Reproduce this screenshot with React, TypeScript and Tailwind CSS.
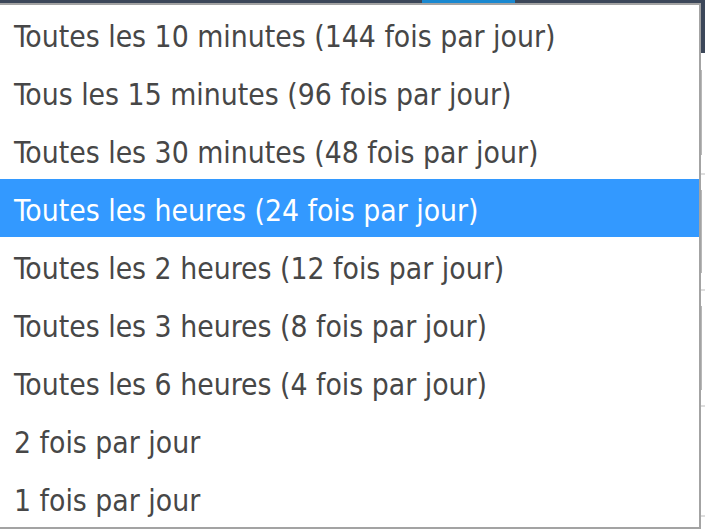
import React from 'react';

const options = [
  'Toutes les 10 minutes (144 fois par jour)',
  'Tous les 15 minutes (96 fois par jour)',
  'Toutes les 30 minutes (48 fois par jour)',
  'Toutes les heures (24 fois par jour)',
  'Toutes les 2 heures (12 fois par jour)',
  'Toutes les 3 heures (8 fois par jour)',
  'Toutes les 6 heures (4 fois par jour)',
  '2 fois par jour',
  '1 fois par jour',
];

const selected = 3;

const App: React.FC = () => {
  return (
    <div className="w-[705px] h-[531px] overflow-hidden bg-white flex flex-col">
      <div className="h-[3px] flex shrink-0">
        <div className="w-[422px] bg-[#3c4759]" />
        <div className="w-[93px] bg-[#1a88d0]" />
        <div className="flex-1 bg-[#3c4759]" />
      </div>
      <div className="flex flex-1">
        <div className="w-[701px] h-[526px] bg-white border-t-2 border-r-2 border-b-2 border-[#a3a3a3] flex flex-col">
          {options.map((o, i) => (
            <div
              key={o}
              className={
                i === selected
                  ? 'h-[58px] shrink-0 flex items-center pl-[14px] pt-[5px] bg-[#3399ff] text-white'
                  : 'h-[58px] shrink-0 flex items-center pl-[14px] pt-[5px] text-[#474747]'
              }
              style={{ fontFamily: '"DejaVu Sans Condensed", "DejaVu Sans", sans-serif' }}
            >
              <span className="text-[29.8px] leading-none whitespace-nowrap">{o}</span>
            </div>
          ))}
        </div>
        <div className="flex-1 flex flex-col">
          <div className="h-[50px] bg-[#3c4759]" />
          <div className="h-[17px]" />
          <div className="h-[85px] w-[1px] bg-[#b8b8b8]" />
          <div className="h-[18px]" />
          <div className="h-[2px] bg-[#dddddd]" />
          <div className="h-[15px]" />
          <div className="h-[83px] w-[1px] bg-[#b8b8b8]" />
          <div className="h-[16px]" />
          <div className="h-[2px] bg-[#dddddd]" />
          <div className="h-[15px]" />
          <div className="h-[84px] w-[1px] bg-[#b8b8b8]" />
          <div className="h-[15px]" />
          <div className="h-[2px] bg-[#dddddd]" />
          <div className="h-[108px]" />
          <div className="h-[2px] bg-[#dddddd]" />
        </div>
      </div>
    </div>
  );
};

export default App;
